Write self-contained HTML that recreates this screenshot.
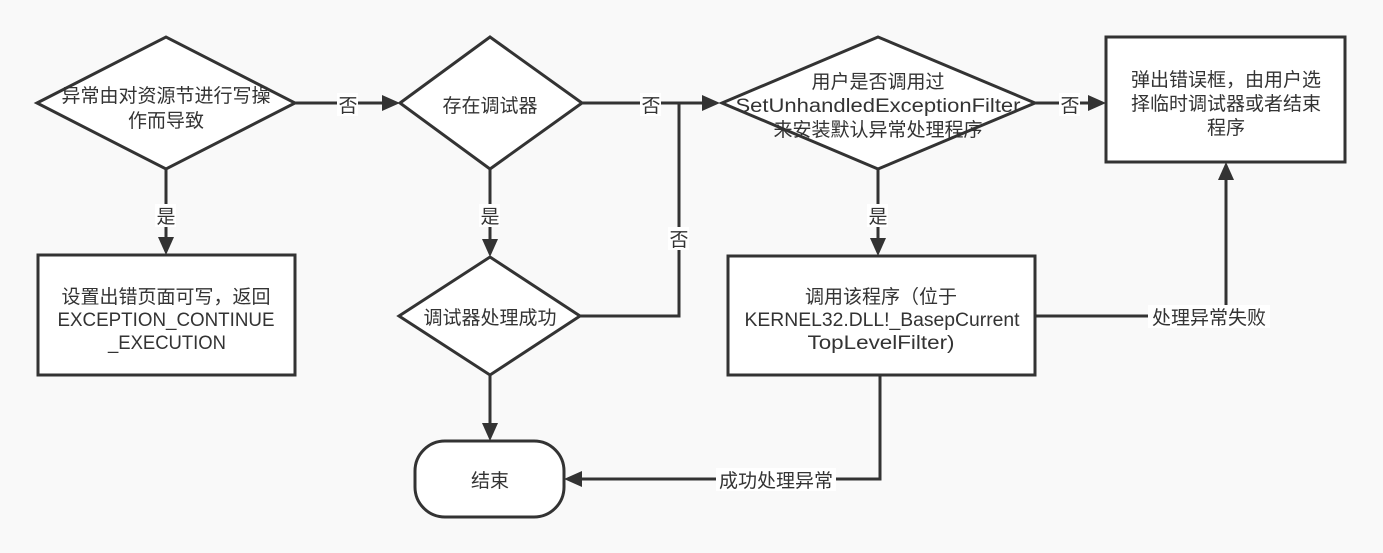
<!DOCTYPE html>
<html><head><meta charset="utf-8"><style>
html,body{margin:0;padding:0;background:#f9f9f9}
svg{display:block}
text{font-family:"Liberation Sans","Noto Sans CJK SC",sans-serif;font-size:19px;fill:#333;text-anchor:middle}
.s{fill:#fff;stroke:#333;stroke-width:3}
.l{fill:none;stroke:#333;stroke-width:3}
.a{fill:#333}
.lb{fill:#fff}
</style></head><body>
<svg width="1383" height="553" viewBox="0 0 1383 553">
<rect width="1383" height="553" fill="#f9f9f9"/>
<polygon class="s" points="37,103 166,37 295,103 166,169"/>
<polygon class="s" points="400,103 490,37 582,103 490,169"/>
<polygon class="s" points="722,103 878,37 1035,103 878,169"/>
<rect class="s" x="1106" y="37" width="239" height="125"/>
<rect class="s" x="38" y="255" width="257" height="120"/>
<polygon class="s" points="399,316 490,257 580,316 490,375"/>
<rect class="s" x="728" y="256" width="307" height="119"/>
<rect class="s" x="415" y="441" width="149" height="76" rx="30"/>
<path class="l" d="M295 103H386"/><polygon class="a" points="400,103 382,95 382,111"/>
<path class="l" d="M582 103H706"/><polygon class="a" points="720,103 702,95 702,111"/>
<path class="l" d="M580 316H679V103"/>
<path class="l" d="M1035 103H1092"/><polygon class="a" points="1106,103 1088,95 1088,111"/>
<path class="l" d="M166 169V241"/><polygon class="a" points="166,255 158,237 174,237"/>
<path class="l" d="M490 169V243"/><polygon class="a" points="490,257 482,239 498,239"/>
<path class="l" d="M878 169V242"/><polygon class="a" points="878,256 870,238 886,238"/>
<path class="l" d="M490 375V427"/><polygon class="a" points="490,441 482,423 498,423"/>
<path class="l" d="M1035 316H1226V176"/><polygon class="a" points="1226,162 1218,180 1234,180"/>
<path class="l" d="M880 375V479H578"/><polygon class="a" points="564,479 582,471 582,487"/>
<rect class="lb" x="337" y="93" width="21" height="23"/>
<rect class="lb" x="640" y="93" width="21" height="23"/>
<rect class="lb" x="1059" y="93" width="21" height="23"/>
<rect class="lb" x="155" y="204" width="21" height="23"/>
<rect class="lb" x="479" y="204" width="21" height="23"/>
<rect class="lb" x="867" y="204" width="21" height="23"/>
<rect class="lb" x="668" y="227" width="21" height="23"/>
<rect class="lb" x="1148" y="305" width="122" height="23"/>
<rect class="lb" x="716" y="468" width="120" height="23"/>
<text x="348" y="112">否</text>
<text x="651" y="112">否</text>
<text x="1070" y="112">否</text>
<text x="166" y="223">是</text>
<text x="490" y="223">是</text>
<text x="878" y="223">是</text>
<text x="679" y="246">否</text>
<text x="1209" y="324">处理异常失败</text>
<text x="776" y="487">成功处理异常</text>
<text x="166" y="102">异常由对资源节进行写操</text>
<text x="166" y="127">作而导致</text>
<text x="490" y="112">存在调试器</text>
<text x="878" y="88">用户是否调用过</text>
<text x="878" y="112" textLength="285" lengthAdjust="spacingAndGlyphs">SetUnhandledExceptionFilter</text>
<text x="878" y="136">来安装默认异常处理程序</text>
<text x="1226" y="86">弹出错误框，由用户选</text>
<text x="1226" y="110">择临时调试器或者结束</text>
<text x="1226" y="134">程序</text>
<text x="166" y="303">设置出错页面可写，返回</text>
<text x="166" y="326" textLength="217" lengthAdjust="spacingAndGlyphs">EXCEPTION_CONTINUE</text>
<text x="167" y="349" textLength="118" lengthAdjust="spacingAndGlyphs">_EXECUTION</text>
<text x="490" y="324">调试器处理成功</text>
<text x="881" y="303">调用该程序（位于</text>
<text x="882" y="326" textLength="275" lengthAdjust="spacingAndGlyphs">KERNEL32.DLL!_BasepCurrent</text>
<text x="881" y="349" textLength="147" lengthAdjust="spacingAndGlyphs">TopLevelFilter)</text>
<text x="490" y="487">结束</text>
</svg>
</body></html>
